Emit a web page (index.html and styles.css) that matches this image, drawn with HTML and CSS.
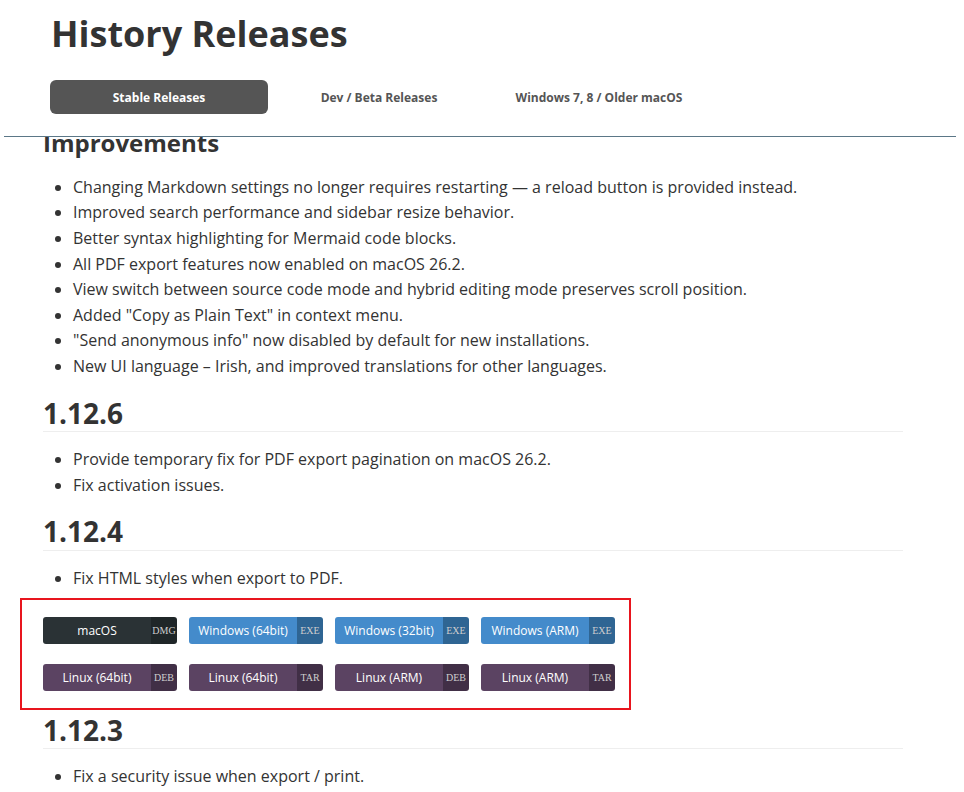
FILE: index.html
```html
<!DOCTYPE html>
<html lang="en">
<head>
<meta charset="utf-8">
<title>History Releases</title>
<link rel="stylesheet" href="styles.css">
</head>
<body>
<header class="page-head">
  <h1 class="title">History Releases</h1>
  <nav class="tabs">
    <a class="tab active">Stable Releases</a>
    <a class="tab">Dev / Beta Releases</a>
    <a class="tab">Windows 7, 8 / Older macOS</a>
  </nav>
</header>
<div class="divider"></div>
<main class="scroller">
  <div class="content">
    <h3 class="sub">Improvements</h3>
    <ul class="notes">
      <li>Changing Markdown settings no longer requires restarting — a reload button is provided instead.</li>
      <li>Improved search performance and sidebar resize behavior.</li>
      <li>Better syntax highlighting for Mermaid code blocks.</li>
      <li>All PDF export features now enabled on macOS 26.2.</li>
      <li>View switch between source code mode and hybrid editing mode preserves scroll position.</li>
      <li>Added "Copy as Plain Text" in context menu.</li>
      <li>"Send anonymous info" now disabled by default for new installations.</li>
      <li>New UI language – Irish, and improved translations for other languages.</li>
    </ul>
    <h2 class="ver">1.12.6</h2>
    <ul class="notes">
      <li>Provide temporary fix for PDF export pagination on macOS 26.2.</li>
      <li>Fix activation issues.</li>
    </ul>
    <h2 class="ver">1.12.4</h2>
    <ul class="notes">
      <li>Fix HTML styles when export to PDF.</li>
    </ul>
    <div class="downloads">
      <a class="dl mac"><span class="lbl">macOS</span><span class="ext">DMG</span></a>
      <a class="dl win"><span class="lbl">Windows (64bit)</span><span class="ext">EXE</span></a>
      <a class="dl win"><span class="lbl">Windows (32bit)</span><span class="ext">EXE</span></a>
      <a class="dl win"><span class="lbl">Windows (ARM)</span><span class="ext">EXE</span></a>
      <a class="dl lin"><span class="lbl">Linux (64bit)</span><span class="ext">DEB</span></a>
      <a class="dl lin"><span class="lbl">Linux (64bit)</span><span class="ext">TAR</span></a>
      <a class="dl lin"><span class="lbl">Linux (ARM)</span><span class="ext">DEB</span></a>
      <a class="dl lin"><span class="lbl">Linux (ARM)</span><span class="ext">TAR</span></a>
    </div>
    <h2 class="ver ver-after">1.12.3</h2>
    <ul class="notes">
      <li>Fix a security issue when export / print.</li>
    </ul>
  </div>
</main>
</body>
</html>
```
FILE: styles.css
```css
html, body {
  margin: 0;
  padding: 0;
  height: 792px;
  overflow: hidden;
  background: #fff;
}
body {
  font-family: "Open Sans", "Noto Sans", sans-serif;
  color: #333;
}
.page-head {
  padding: 12px 0 0 50px;
  height: 136px;
  box-sizing: border-box;
}
.title {
  margin: 0;
  font-size: 36px;
  line-height: 1.2;
  font-weight: 700;
  color: #333;
  padding-left: 1px;
}
.tabs {
  display: flex;
  gap: 2px;
  margin-top: 25px;
}
.tab {
  width: 218px;
  height: 34px;
  display: flex;
  align-items: center;
  justify-content: center;
  font-size: 12px;
  font-weight: 700;
  color: #555;
  border-radius: 6px;
}
.tab.active {
  background: #555;
  color: #fff;
}
.divider {
  margin-left: 4px;
  width: 952px;
  height: 1px;
  background: #5b7787;
}
.scroller {
  height: 655px;
  overflow: hidden;
}
.content {
  width: 860px;
  margin-left: 43px;
  padding-top: 1px;
}
.sub {
  font-size: 24px;
  line-height: 1.2;
  font-weight: 700;
  margin: -9px 0 17px 0;
}
.notes {
  margin: 0;
  padding-left: 30px;
  font-size: 16px;
  line-height: 1.6;
}
.ver {
  font-size: 28px;
  line-height: 1.2;
  font-weight: 700;
  margin: 17px 0 15px 0;
  padding-bottom: 1px;
  border-bottom: 1px solid #eee;
}
.ver-after {
  margin-top: 4px;
}
.downloads {
  box-sizing: border-box;
  margin: 6px 0 0 -23px;
  width: 611px;
  border: 2px solid #e8151e;
  padding: 17px 14px 17px 21px;
  display: grid;
  grid-template-columns: repeat(4, 134px);
  column-gap: 12px;
  row-gap: 20px;
}
.dl {
  display: flex;
  height: 27px;
  border-radius: 3px;
  overflow: hidden;
  color: #fff;
}
.dl .lbl {
  flex: 1;
  display: flex;
  align-items: center;
  justify-content: center;
  font-size: 12px;
}
.dl .ext {
  width: 26px;
  display: flex;
  align-items: center;
  justify-content: center;
  font-family: "Liberation Serif", "DejaVu Serif", serif;
  font-size: 10px;
  color: #cfcfcf;
}
.mac .lbl { background: #2a3235; }
.mac .ext { background: #1f2628; }
.win .lbl { background: #448bcb; }
.win .ext { background: #2f6593; }
.lin .lbl { background: #5b4362; }
.lin .ext { background: #412f46; }
```
